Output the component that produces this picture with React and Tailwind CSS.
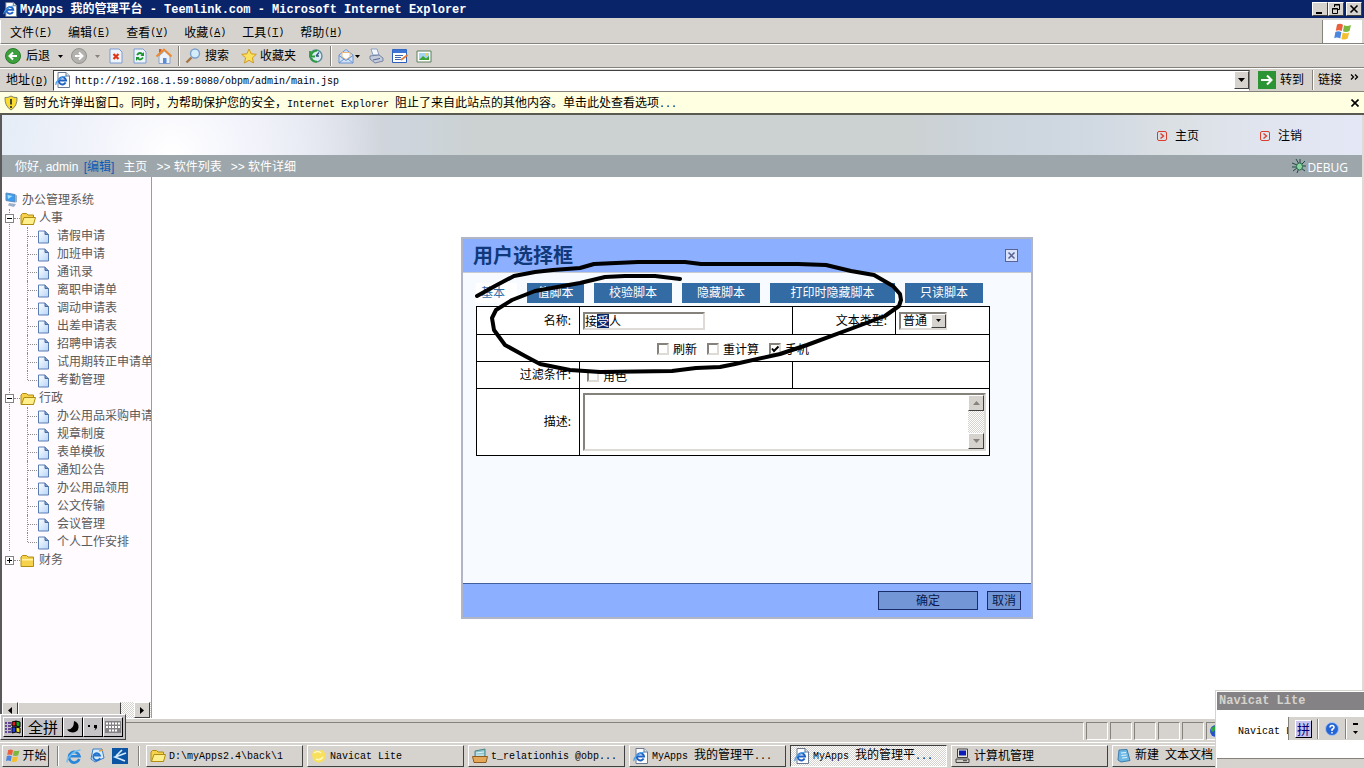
import { useEffect, useRef } from 'react';

const raised = 'border border-t-white border-l-white border-r-[#404040] border-b-[#404040] bg-[#d6d3ce]';
const hatch = 'bg-[repeating-conic-gradient(#ffffff_0_25%,#d6d3ce_0_50%)] bg-[length:2px_2px]';

/* Latin runs use the narrow monospace face, everything else the CJK one */
const Mixed = ({ text, bold = false }) => (
    <span className="whitespace-pre">
        {text.split(/([\x20-\x7e]+)/).filter(Boolean).map((part, i) => (
            <span
                key={i}
                className={
                    /^[\x20-\x7e]/.test(part)
                        ? `font-['Liberation_Mono','DejaVu_Sans_Mono',monospace] ${bold ? 'text-[12px]' : 'text-[10px]'}`
                        : 'text-[12px]'
                }
            >
                {part}
            </span>
        ))}
    </span>
);

const IePage = ({ className = 'w-4 h-4' }) => (
    <svg viewBox="0 0 16 16" className={`${className} shrink-0`}>
        <path d="M3 .5h8l3.500 3.500v11.500H3z" fill="#fff" stroke="#6b7a90" />
        <path d="M11 .5V4h3.500" fill="#dfe6f0" stroke="#6b7a90" />
        <path d="M10.600 10.600A3.600 3.600 0 1 1 11 8.400H4.200" fill="none" stroke="#1f62c4" strokeWidth="2" />
        <path d="M1 13C0 10 6 4.500 11.500 4" fill="none" stroke="#4aa0e8" strokeWidth="1.200" />
    </svg>
);

const IeLogo = () => (
    <svg viewBox="0 0 16 16" className="w-4 h-4">
        <path d="M13.300 11A5.300 5.300 0 1 1 13.500 8.300H4" fill="none" stroke="#2a86d8" strokeWidth="2.600" />
        <path d="M1.500 14.500C-.5 12 6 3 14.500 2" fill="none" stroke="#6cc0f4" strokeWidth="1.400" />
    </svg>
);

const WinFlag = ({ className = 'w-5 h-5' }) => (
    <svg viewBox="0 0 20 20" className={`${className} shrink-0`}>
        <path d="M4 2.500q3-1.500 6 .3L8.800 9q-3-1.600-6-.2z" fill="#e8603c" />
        <path d="M11 3.200q3 1.500 7-.2L16.500 9q-3.500 1.600-6.500.3z" fill="#7cb83c" />
        <path d="M2.400 10q3-1.400 6 .2L7.200 16.500q-3-1.700-6-.3z" fill="#4a86e0" />
        <path d="M9.700 10.600q3 1.500 6.500-.2L14.700 16.600q-3.500 1.700-6.300.3z" fill="#f4c030" />
    </svg>
);

const Folder = ({ open }) => (
    <svg viewBox="0 0 16 16" className="w-4 h-4 shrink-0">
        <path d="M1 13.500V4l1.500-1.500h4L8 4h5.500v9.500z" fill="#f6d24c" stroke="#b08c10" />
        {open ? (
            <path d="M1.500 13.500L4 6.500h11.500L13.500 13.500z" fill="#fdf08c" stroke="#b08c10" />
        ) : (
            <path d="M2 6h11v1.500H2z" fill="#fff3a6" />
        )}
    </svg>
);

const Leaf = () => (
    <svg viewBox="0 0 13 14" className="w-[13px] h-[14px] shrink-0">
        <defs>
            <linearGradient id="sheet" x1="0" y1="0" x2="1" y2="1">
                <stop offset="0" stopColor="#fff" />
                <stop offset="1" stopColor="#b4d4f8" />
            </linearGradient>
        </defs>
        <path d="M1.500 1H8l3.500 3.500V13h-10z" fill="url(#sheet)" stroke="#5a7cb4" />
        <path d="M8 1v3.500h3.500" fill="#7c9cd0" stroke="#4a6ca4" />
    </svg>
);

const Caret = ({ className = 'fill-black' }) => (
    <svg viewBox="0 0 5 3" className={`w-[5px] h-[3px] shrink-0 ${className}`}>
        <path d="M0 0h5L2.500 3z" />
    </svg>
);

const Separator = ({ className = '' }) => (
    <span className={`w-[2px] h-5 border-l border-l-[#84827b] border-r border-r-white ${className}`} />
);

const RoundArrow = ({ forward }) => (
    <svg viewBox="0 0 16 16" className="w-4 h-4 shrink-0">
        <circle cx="8" cy="8" r="7.500" fill={forward ? '#b4b2ae' : '#3ca03c'} stroke={forward ? '#94928e' : '#2a7c2a'} />
        <path d={forward ? 'M4 8h7M8 4.500L11.500 8 8 11.500' : 'M12 8H5M8 4.500L4.500 8 8 11.500'} fill="none" stroke="#fff" strokeWidth="2" />
    </svg>
);

const PageIcon = ({ children }) => (
    <svg viewBox="0 0 14 16" className="w-[14px] h-4 shrink-0">
        <path d="M1 1h9l3 3v11H1z" fill="#eef4fc" stroke="#7c9cd4" />
        {children}
    </svg>
);

const TitleBar = () => (
    <header className="flex h-[18px] shrink-0 items-center bg-[#0a246a] pl-[3px] pr-[2px] text-white">
        <IePage className="w-[15px] h-[15px]" />
        <h1 className="ml-[2px] flex-1 truncate text-[12px] leading-[18px] font-bold">
            <Mixed text="MyApps 我的管理平台 - Teemlink.com - Microsoft Internet Explorer" bold />
        </h1>
        <button aria-label="最小化" className={`h-[14px] w-4 ${raised}`}>
            <svg viewBox="0 0 14 12" className="block h-3 w-[14px]"><path d="M3 9h6v2H3z" /></svg>
        </button>
        <button aria-label="还原" className={`h-[14px] w-4 ${raised}`}>
            <svg viewBox="0 0 14 12" className="block h-3 w-[14px]" fill="none" stroke="#000">
                <path d="M5.500 4V1.500h5v5H9M5 2h6M3.500 5.500h5v5h-5zM3 6h6" />
            </svg>
        </button>
        <button aria-label="关闭" className={`ml-[2px] h-[14px] w-4 ${raised}`}>
            <svg viewBox="0 0 14 12" className="block h-3 w-[14px]"><path d="M3.500 2.500l7 7m0-7l-7 7" stroke="#000" strokeWidth="1.600" /></svg>
        </button>
    </header>
);

const menus = [['文件', 'F'], ['编辑', 'E'], ['查看', 'V'], ['收藏', 'A'], ['工具', 'T'], ['帮助', 'H']];

const MenuBar = () => (
    <nav className="mt-[2px] flex h-6 shrink-0 items-center border-b border-b-[#84827b] border-l border-l-white pl-[9px] pr-[2px]">
        {menus.map(([name, key]) => (
            <button key={key} className="mr-4 flex items-center pt-[2px] text-[12px] leading-4">
                {name}
                <span className="font-['Liberation_Mono',monospace] text-[10px]">(<u>{key}</u>)</span>
            </button>
        ))}
        <span className="ml-auto flex h-full w-10 items-center justify-center border-l border-l-[#84827b] bg-white">
            <WinFlag />
        </span>
    </nav>
);

const ToolBar = () => (
    <div className="flex h-6 shrink-0 items-center border-b border-b-[#84827b] border-t border-t-white pl-[5px] text-[12px]">
        <button className="flex items-center gap-[5px]"><RoundArrow />后退</button>
        <Caret className="ml-[8px] fill-black" />
        <button aria-label="前进" className="ml-[8px]"><RoundArrow forward /></button>
        <Caret className="ml-[8px] fill-[#84827b]" />
        <button aria-label="停止" className="ml-[9px]">
            <PageIcon><path d="M4.500 6l5 5m0-5l-5 5" stroke="#e03414" strokeWidth="2.200" /></PageIcon>
        </button>
        <button aria-label="刷新" className="ml-[10px]">
            <PageIcon>
                <path d="M4 7q3-4 6 0M10 9.500q-3 4-6 0" fill="none" stroke="#1c9430" strokeWidth="1.800" />
                <path d="M11 4v4H7.500zM3 13V9h3.500z" fill="#1c9430" />
            </PageIcon>
        </button>
        <button aria-label="主页" className="ml-[9px]">
            <svg viewBox="0 0 16 16" className="w-4 h-4">
                <path d="M3 8v7.500h11V8L8.500 3z" fill="#eef2fa" stroke="#8ca4cc" />
                <path d="M3 1h2.500v4H3z" fill="#c05a2c" />
                <path d="M.5 8.500L8 1.500l7.500 7" fill="none" stroke="#ec8a34" strokeWidth="2" />
                <path d="M7 10h3.500v5.500H7z" fill="#5a8cd8" />
            </svg>
        </button>
        <Separator className="ml-[6px]" />
        <button className="ml-[5px] flex items-center gap-1">
            <svg viewBox="0 0 16 16" className="w-4 h-4">
                <path d="M1.500 14.500L6.500 9.500" stroke="#a87444" strokeWidth="2.400" />
                <circle cx="10" cy="5.500" r="4.500" fill="#d4ecfc" stroke="#7ca0cc" strokeWidth="1.400" />
            </svg>
            搜索
        </button>
        <button className="ml-3 flex items-center gap-[3px]">
            <svg viewBox="0 0 16 16" className="w-4 h-4">
                <path d="M8 1l2.100 4.800 5.200.5-3.900 3.500 1.100 5.200L8 12.300 3.500 15l1.100-5.200L.7 6.300l5.200-.5z" fill="#fce060" stroke="#d09c1c" />
            </svg>
            收藏夹
        </button>
        <button aria-label="历史" className="ml-[11px]">
            <svg viewBox="0 0 16 16" className="w-4 h-4">
                <circle cx="9" cy="8" r="6" fill="#dcecf4" stroke="#5c8c9c" strokeWidth="1.400" />
                <path d="M9 8l3-3.500M9 8h3" stroke="#305880" strokeWidth="1.300" />
                <path d="M3 3v5.500h5M3.500 8.500Q5 3 10 2.500M4 10q2 4 6 3.500" fill="none" stroke="#2c9c3c" strokeWidth="1.800" />
            </svg>
        </button>
        <Separator className="ml-[7px]" />
        <button aria-label="邮件" className="ml-[6px]">
            <svg viewBox="0 0 16 16" className="w-4 h-4">
                <path d="M1 7l7-5.500L15 7v8H1z" fill="#cfe2fa" stroke="#6c94d0" />
                <path d="M4 4.500h8V9l-4 2.500L4 9z" fill="#fff" stroke="#e8b878" />
                <path d="M1 7.500l7 5 7-5M1 15l5-4M15 15l-5-4" fill="none" stroke="#6c94d0" />
            </svg>
        </button>
        <Caret className="ml-[1px] fill-black" />
        <button aria-label="打印" className="ml-[8px]">
            <svg viewBox="0 0 16 16" className="w-4 h-4">
                <path d="M3 1h6l2 6H5z" fill="#f4f8fe" stroke="#8ca0c4" />
                <path d="M2 8l9-1 4 3v3l-8 2-5-4z" fill="#c4ccdc" stroke="#7484a4" />
                <path d="M5 12l7-1.500" stroke="#54648c" />
            </svg>
        </button>
        <button aria-label="编辑" className="ml-[8px]">
            <svg viewBox="0 0 16 16" className="w-4 h-4">
                <path d="M.5 1.500h14v13H.5z" fill="#fff" stroke="#2c5cbc" />
                <path d="M.5 1.500h14V5H.5z" fill="#3c74d4" />
                <path d="M3 7.500h8M3 9.500h6M3 11.500h7" stroke="#3c64ac" />
                <path d="M9 12l6.500-5" stroke="#e07c3c" strokeWidth="1.800" />
            </svg>
        </button>
        <button aria-label="图片" className="ml-[8px]">
            <svg viewBox="0 0 16 16" className="w-4 h-4">
                <path d="M1 3h14v11H1z" fill="#fff" stroke="#5c7c5c" />
                <path d="M3 5h10v7H3z" fill="#a4d4f4" />
                <path d="M3 12l4-4 3 2.500L13 8v4z" fill="#3ca434" />
                <circle cx="10.500" cy="6.500" r="1.300" fill="#f4d43c" />
            </svg>
        </button>
    </div>
);

const AddressBar = () => (
    <div className="flex h-6 shrink-0 items-center border-b border-b-[#84827b] border-t border-t-white text-[12px]">
        <label htmlFor="address" className="w-[53px] pl-[6px]">
            地址<span className="font-['Liberation_Mono',monospace] text-[10px]">(<u>D</u>)</span>
        </label>
        <div className="flex h-[21px] flex-1 items-center border border-t-[#404040] border-l-[#404040] border-r-[#84827b] border-b-white bg-white pl-[1px]">
            <IePage />
            <input
                id="address"
                className="ml-1 h-5 min-w-0 flex-1 bg-transparent pt-[2px] font-['Liberation_Mono',monospace] text-[10px] outline-none"
                defaultValue="http://192.168.1.59:8080/obpm/admin/main.jsp"
            />
            <button aria-label="展开" className={`flex h-[18px] w-[15px] items-center justify-center ${raised}`}>
                <svg viewBox="0 0 7 4" className="w-[7px] h-1"><path d="M0 0h7L3.500 4z" /></svg>
            </button>
        </div>
        <button className="ml-2 flex items-center gap-1">
            <svg viewBox="0 0 18 18" className="w-[18px] h-[18px]">
                <path d="M0 0h18v18H0z" fill="#2c9434" />
                <path d="M3 9h10M9 4.500L13.500 9 9 13.500" fill="none" stroke="#fff" strokeWidth="2" />
            </svg>
            转到
        </button>
        <Separator className="ml-2" />
        <button className="ml-1 flex items-start gap-2 pr-[5px]">
            链接
            <svg viewBox="0 0 9 6" className="mt-[3px] h-[6px] w-[9px]" fill="none" stroke="#000" strokeWidth="1.300">
                <path d="M1 .5L3.500 3 1 5.500M5 .5L7.500 3 5 5.500" />
            </svg>
        </button>
    </div>
);

const InfoBar = () => (
    <div role="alert" className="flex h-[23px] shrink-0 items-center border-b-2 border-b-[#5a5a52] bg-[#ffffe1] pl-1 pr-[5px] text-[12px]">
        <svg viewBox="0 0 14 16" className="mr-[5px] h-4 w-[14px] shrink-0">
            <path d="M7 1q3 2 6 1.500Q13.500 11 7 15 .5 11 1 2.500 4 3 7 1z" fill="#f8dc30" stroke="#84846c" />
            <path d="M7 4v5.500M7 11v2" stroke="#333" strokeWidth="1.800" />
        </svg>
        <p className="flex-1 truncate pt-[2px] leading-5">
            <Mixed text="暂时允许弹出窗口。同时，为帮助保护您的安全，Internet Explorer 阻止了来自此站点的其他内容。单击此处查看选项..." />
        </p>
        <button aria-label="关闭提示">
            <svg viewBox="0 0 8 8" className="h-2 w-2"><path d="M.5.5l7 7m0-7l-7 7" stroke="#000" strokeWidth="1.600" /></svg>
        </button>
    </div>
);

const BannerLink = ({ children }) => (
    <a href="#" className="flex items-center gap-2 text-[12px] leading-4 text-black">
        <svg viewBox="0 0 10 10" className="h-[10px] w-[10px]" fill="none" stroke="#dc3c2c">
            <rect x=".5" y=".5" width="9" height="9" rx="1.500" />
            <path d="M3.500 2.500L6.500 5 3.500 7.500" strokeWidth="1.400" />
        </svg>
        {children}
    </a>
);

const Banner = () => (
    <div className="flex h-10 shrink-0 items-center justify-end gap-[61px] bg-[radial-gradient(circle_at_170px_40px,#ffffff_0px,#f4f5fc_70px,transparent_210px),linear-gradient(90deg,#dfeaf5_0%,#dcdfea_22%,#d0d5dc_28%,#ccd5db_31%,#ccd1d1_35%,#ccd1d1_66%,#ccd4dc_72%,#d0d8e2_80%,#dbe0e4_86%,#e0e4ee_92%,#e4e8f6_100%)] pt-[2px] pr-[60px]">
        <BannerLink>主页</BannerLink>
        <BannerLink>注销</BannerLink>
    </div>
);

const Breadcrumb = () => (
    <nav className="flex h-[22px] shrink-0 items-center bg-[#9ca6ab] pt-[2px] pl-[13px] pr-[14px] font-['Liberation_Sans','Noto_Sans_CJK_SC',sans-serif] text-[12px] leading-4 text-white">
        <span className="whitespace-pre">你好, admin </span>
        <a href="#" className="ml-[2px] text-[#0a5cb4]">[编辑]</a>
        <a href="#" className="ml-[9px]">主页</a>
        <a href="#" className="ml-[9px]">&gt;&gt; 软件列表</a>
        <a href="#" className="ml-[9px]">&gt;&gt; 软件详细</a>
        <a href="#" className="ml-auto flex items-center font-['Open_Sans',sans-serif]">
            <svg viewBox="0 0 16 16" className="mb-[3px] h-4 w-4">
                <path d="M1 5l5 2M2 13l4-3M1 9h5M5 1l3 5M9 1v5M14 3l-4 4M15 8h-5M14 13l-4-3M6 15l2-5" stroke="#1c4c44" />
                <ellipse cx="8.500" cy="8.500" rx="3" ry="3.500" fill="#8cd4a0" stroke="#2c6c4c" />
            </svg>
            <span className="pt-[2px]">DEBUG</span>
        </a>
    </nav>
);

const tree = [
    { name: '人事', open: true, items: ['请假申请', '加班申请', '通讯录', '离职申请单', '调动申请表', '出差申请表', '招聘申请表', '试用期转正申请单', '考勤管理'] },
    { name: '行政', open: true, items: ['办公用品采购申请', '规章制度', '表单模板', '通知公告', '办公用品领用', '公文传输', '会议管理', '个人工作安排'] },
    { name: '财务', open: false, items: [] },
];

const TreeFolder = ({ name, open, items, last }) => (
    <li className={`border-l border-dotted ${last ? 'border-transparent' : 'border-[#8c8c8c]'}`}>
        <div className="flex h-[18px] items-center">
            <button
                aria-label={name}
                className="-ml-[5px] flex h-[9px] w-[9px] shrink-0 items-center justify-center border border-[#848484] bg-white"
            >
                <svg viewBox="0 0 5 5" className="h-[5px] w-[5px]">
                    <path d={open ? 'M0 2h5v1H0z' : 'M0 2h2V0h1v2h2v1H3v2H2V3H0z'} />
                </svg>
            </button>
            <span className="w-[6px] border-t border-dotted border-[#8c8c8c]" />
            <span className="pt-[2px]"><Folder open={open} /></span>
            <a href="#" className="ml-[3px]">{name}</a>
        </div>
        <ul className="pl-[17px]">
            {items.map((item, i) => (
                <li key={item} className="flex h-[18px] items-center">
                    <span className={`w-0 shrink-0 border-l border-dotted border-[#8c8c8c] ${i === items.length - 1 ? 'h-[9px] self-start' : 'h-[18px]'}`} />
                    <span className="w-[9px] shrink-0 border-t border-dotted border-[#8c8c8c]" />
                    <span className="shrink-0 pt-[2px]"><Leaf /></span>
                    <a href="#" className="ml-[7px] whitespace-nowrap">{item}</a>
                </li>
            ))}
        </ul>
    </li>
);

const Sidebar = () => (
    <aside className="flex w-[150px] shrink-0 flex-col border-r border-r-[#9c9c9c] bg-[#fffbff]">
        <div className="flex-1 overflow-hidden pt-[14px] text-[12px] leading-4 text-[#5a5a5a]">
            <div className="flex h-[18px] items-center gap-1 pl-[2px]">
                <svg viewBox="0 0 14 16" className="h-4 w-[14px] shrink-0">
                    <path d="M2 1l9 1.500V10L2 8.500z" fill="#3c9cf0" stroke="#5c8cbc" />
                    <path d="M3.500 3l5 1L4 7z" fill="#a4e0ff" />
                    <path d="M11 2.500l2 1V10l-2 .5zM5 11l7 1-2 3-6-1.500z" fill="#9cb0c8" />
                </svg>
                <a href="#">办公管理系统</a>
            </div>
            <ul className="pl-[7px]">
                {tree.map((folder, i) => (
                    <TreeFolder key={folder.name} {...folder} last={i === tree.length - 1} />
                ))}
            </ul>
        </div>
        <div className={`flex h-4 shrink-0 ${hatch}`}>
            <button aria-label="向左" className={`flex h-4 w-4 items-center justify-center ${raised}`}>
                <svg viewBox="0 0 4 7" className="h-[7px] w-1"><path d="M4 0v7L0 3.500z" /></svg>
            </button>
            <span className={`h-4 w-[103px] ${raised}`} />
            <button aria-label="向右" className={`mr-[1px] ml-auto flex h-4 w-4 items-center justify-center ${raised}`}>
                <svg viewBox="0 0 4 7" className="h-[7px] w-1"><path d="M0 0v7l4-3.500z" /></svg>
            </button>
        </div>
    </aside>
);

const sunken = 'border-2 border-t-[#84827b] border-l-[#84827b] border-r-[#dedbd6] border-b-[#dedbd6] bg-white';

const Check = ({ id, label, checked = false }) => (
    <span className="inline-flex items-center gap-1">
        <span className="relative inline-flex">
            <input
                id={id}
                type="checkbox"
                defaultChecked={checked}
                className={`peer h-3 w-3 appearance-none ${sunken}`}
            />
            <svg viewBox="0 0 12 12" className="pointer-events-none absolute inset-0 hidden h-3 w-3 peer-checked:block">
                <path d="M3 5.500L5 8l4.500-4.500" fill="none" stroke="#000" strokeWidth="2" />
            </svg>
        </span>
        <label htmlFor={id} className="pt-[1px]">{label}</label>
    </span>
);

const tabs = [
    ['值脚本', 'w-[57px]'],
    ['校验脚本', 'w-[78px]'],
    ['隐藏脚本', 'w-[78px]'],
    ['打印时隐藏脚本', 'w-[125px]'],
    ['只读脚本', 'w-[78px]'],
];

const FieldTable = () => {
    const nameRef = useRef(null);

    useEffect(() => {
        nameRef.current.focus();
        nameRef.current.setSelectionRange(1, 2);
    }, []);

    return (
        <table className="mt-[3px] w-[514px] table-fixed border-collapse border border-black bg-white text-[12px] leading-4 [&_td]:border [&_td]:border-black [&_td]:p-0 [&_th]:border [&_th]:border-black [&_th]:p-0 [&_th]:pr-2 [&_th]:text-right [&_th]:font-normal">
            <colgroup>
                <col className="w-[103px]" />
                <col className="w-[213px]" />
                <col className="w-[103px]" />
                <col />
            </colgroup>
            <tbody>
                <tr className="h-7">
                    <th><label htmlFor="field-name">名称:</label></th>
                    <td>
                        <input
                            id="field-name"
                            ref={nameRef}
                            defaultValue="接受人"
                            className={`ml-[3px] block h-[18px] w-[122px] text-[12px] outline-none selection:bg-[#0a246a] selection:text-white ${sunken}`}
                        />
                    </td>
                    <th><label htmlFor="field-type">文本类型:</label></th>
                    <td>
                        <span className="relative ml-[3px] flex w-12">
                            <select id="field-type" className={`h-[18px] w-12 appearance-none pl-[2px] text-[12px] leading-[14px] outline-none ${sunken}`}>
                                <option>普通</option>
                            </select>
                            <span className={`pointer-events-none absolute top-[2px] right-[1px] flex h-[14px] w-[15px] items-center justify-center ${raised}`}>
                                <Caret />
                            </span>
                        </span>
                    </td>
                </tr>
                <tr className="h-[27px]">
                    <td colSpan={4}>
                        <div className="flex justify-center gap-[10px] pt-[2px]">
                            <Check id="refresh" label="刷新" />
                            <Check id="recalc" label="重计算" />
                            <Check id="mobile" label="手机" checked />
                        </div>
                    </td>
                </tr>
                <tr className="h-[27px]">
                    <th scope="row">过滤条件:</th>
                    <td><div className="flex pt-[2px] pl-[7px]"><Check id="role" label="角色" /></div></td>
                    <td colSpan={2} />
                </tr>
                <tr className="h-[67px]">
                    <th><label htmlFor="description">描述:</label></th>
                    <td colSpan={3}>
                        <div className={`mx-[3px] flex h-[58px] ${sunken}`}>
                            <textarea id="description" className="min-w-0 flex-1 resize-none overflow-hidden outline-none" />
                            <div className={`flex w-4 flex-col justify-between ${hatch}`}>
                                <button aria-label="向上" className={`flex h-4 w-4 items-center justify-center ${raised}`}>
                                    <svg viewBox="0 0 7 4" className="h-1 w-[7px] fill-[#84827b]"><path d="M0 4h7L3.500 0z" /></svg>
                                </button>
                                <button aria-label="向下" className={`flex h-4 w-4 items-center justify-center ${raised}`}>
                                    <svg viewBox="0 0 7 4" className="h-1 w-[7px] fill-[#84827b]"><path d="M0 0h7L3.500 4z" /></svg>
                                </button>
                            </div>
                        </div>
                    </td>
                </tr>
            </tbody>
        </table>
    );
};

const scribble =
    'M16 59L34 49 53 39 74 35 92 33 119 31 133 27 177 25H224L240 27H337L365 28 390 34 413 38 432 49 439 57 440 63 438 69 424 79 392 91 346 108 319 117 274 127 259 130 235 131 211 134 139 135 109 133 79 127 64 119 44 108 33 93 31 81 35 73 51 63 74 54 119 46 144 40 164 39H194L219 42';

const Dialog = () => (
    <section role="dialog" aria-labelledby="dialog-title" className="relative w-[572px] shrink-0">
        <div className="border-2 border-[#b1b5c8] bg-[#f7faff]">
            <div className="flex h-[34px] items-center justify-between border-b border-b-[#c8ccd0] bg-[#8cb0ff] pr-[13px] pl-[10px]">
                <h2 id="dialog-title" className="text-[20px] leading-6 font-bold text-[#10397b]">用户选择框</h2>
                <button aria-label="关闭">
                    <svg viewBox="0 0 13 13" className="block h-[13px] w-[13px]" stroke="#5a6294">
                        <rect x=".5" y=".5" width="12" height="12" fill="#d8e2fa" />
                        <path d="M3.500 3.500l6 6m0-6l-6 6" strokeWidth="1.500" />
                    </svg>
                </button>
            </div>
            <div className="h-[310px] px-[13px] pt-[10px]">
                <div role="tablist" className="flex gap-[10px] text-[12px] leading-5">
                    <button role="tab" aria-selected="true" className="h-5 w-[41px] bg-white pl-[5px] text-left text-[#336ba5]">基本</button>
                    {tabs.map(([name, width]) => (
                        <button key={name} role="tab" aria-selected="false" className={`h-5 bg-[#336ba5] text-white ${width}`}>{name}</button>
                    ))}
                </div>
                <FieldTable />
            </div>
            <div className="flex h-[34px] items-center justify-end gap-[9px] border-t border-t-[#42619c] bg-[#8cb0ff] pr-[10px] text-[12px] leading-4 text-[#0a1a4a]">
                <button className="h-[19px] w-[100px] border border-[#182c6b] bg-[#7396d6]">确定</button>
                <button className="h-[19px] w-[34px] border border-[#182c6b] bg-[#7396d6]">取消</button>
            </div>
        </div>
        <svg viewBox="0 0 572 382" className="pointer-events-none absolute inset-0 h-full w-full">
            <path d={scribble} fill="none" stroke="#000" strokeWidth="4" strokeLinecap="round" strokeLinejoin="round" />
        </svg>
    </section>
);

const StatusBar = () => (
    <footer className="flex h-6 shrink-0 gap-[2px] border-t border-t-white bg-[#d6d3ce] pt-[3px] pb-[2px] pr-[136px]">
        <span className="flex-1 border-t border-t-[#84827b] border-r border-r-white" />
        {[1, 2, 3, 4, 5].map((n) => (
            <span key={n} className="w-[22px] border border-t-[#84827b] border-l-[#84827b] border-r-white border-b-white" />
        ))}
        <span className="flex w-[22px] items-center border border-t-[#84827b] border-l-[#84827b] border-r-white border-b-white pl-[2px]">
            <svg viewBox="0 0 14 14" className="h-[14px] w-[14px]">
                <circle cx="7" cy="7" r="6" fill="#2850c8" />
                <path d="M2 4l4-2 1 3-3 3-2-1zM5 9l4 1-1 3z" fill="#2ca83c" />
            </svg>
        </span>
    </footer>
);

const ServerIcon = () => (
    <svg viewBox="0 0 16 16" className="h-4 w-4 shrink-0">
        <path d="M3 3l10-2v8H3z" fill="#8cc4cc" stroke="#4c848c" />
        <path d="M4 5l8-1M4 7h8" stroke="#e4f4f4" />
        <path d="M.5 8.500h15l-1.500 6H2z" fill="#e4a858" stroke="#8c5c24" />
    </svg>
);

const ComputerIcon = () => (
    <svg viewBox="0 0 16 16" className="h-4 w-4 shrink-0">
        <path d="M2.500 1h10v8.500h-10z" fill="#e8e8e0" stroke="#404040" />
        <path d="M4 2.500h7v5H4z" fill="#0c1cb4" />
        <path d="M1 11h13v3.500H1z" fill="#d4d0c8" stroke="#404040" />
        <path d="M8 12.700h4" stroke="#404040" />
    </svg>
);

const NoteIcon = () => (
    <svg viewBox="0 0 16 16" className="h-4 w-4 shrink-0">
        <path d="M3 2l8-.5 3 11L5 14 2 12z" fill="#6cb8e4" stroke="#3c7cac" />
        <path d="M5 5l5-.5M5.500 7.500l5-.5M6 10l5-.5" stroke="#e0f4ff" />
    </svg>
);

const NavicatIcon = () => (
    <svg viewBox="0 0 16 16" className="h-4 w-4 shrink-0">
        <path d="M3 2l4 1 5-1 3 5-2 6-6 2-5-3-1-6z" fill="#f8e05c" />
        <path d="M3 5q4-3 7 0M5 11q4 2 7-2" fill="none" stroke="#fff8c0" strokeWidth="1.500" />
    </svg>
);

const tasks = [
    { icon: <Folder open />, text: 'D:\\myApps2.4\\back\\1' },
    { icon: <NavicatIcon />, text: 'Navicat Lite' },
    { icon: <ServerIcon />, text: 't_relationhis @obp...' },
    { icon: <IePage />, text: 'MyApps 我的管理平...' },
    { icon: <IePage />, text: 'MyApps 我的管理平...', active: true },
    { icon: <ComputerIcon />, text: '计算机管理' },
    { icon: <NoteIcon />, text: '新建 文本文档' },
];

const TaskBar = () => (
    <nav className="flex h-[26px] shrink-0 items-center overflow-hidden border-t border-t-white bg-[#d6d3ce] pl-[2px] text-[12px] leading-4">
        <button className={`flex h-[22px] w-[47px] shrink-0 items-center justify-center ${raised}`}>
            <WinFlag className="h-4 w-[18px]" />开始
        </button>
        <Separator className="ml-2 h-5" />
        <button aria-label="Internet Explorer" className="ml-[7px]"><IeLogo /></button>
        <button aria-label="Outlook" className="ml-[7px]">
            <svg viewBox="0 0 16 16" className="h-4 w-4">
                <path d="M4 1h9l2 9-9 4-4-3z" fill="#d8ecfc" stroke="#3c7cc4" />
                <path d="M11 10A3.500 3.500 0 1 1 11 7.500H5.500" fill="none" stroke="#2474cc" strokeWidth="1.800" />
                <path d="M10 3l4-1" stroke="#e0a040" strokeWidth="1.500" />
            </svg>
        </button>
        <button aria-label="桌面" className="ml-[7px]">
            <svg viewBox="0 0 16 16" className="h-4 w-4">
                <rect width="16" height="16" fill="#0c54a4" />
                <path d="M14 5L3 9l10 4M10 2L4 8" fill="none" stroke="#d4ecff" strokeWidth="1.600" />
            </svg>
        </button>
        <Separator className="ml-[10px] h-5 shrink-0" />
        <div className="ml-[6px] flex gap-1">
            {tasks.map(({ icon, text, active }, i) => (
                <button
                    key={i}
                    className={`flex h-[22px] w-[157px] shrink-0 items-center gap-[3px] pl-[3px] ${
                        active ? `border border-t-[#404040] border-l-[#404040] border-r-white border-b-white ${hatch}` : raised
                    }`}
                >
                    {icon}
                    <Mixed text={text} />
                </button>
            ))}
        </div>
    </nav>
);

const imeButton = 'flex h-5 items-center justify-center border border-t-white border-l-white border-r-black border-b-black bg-[#c6c3c6]';

const ImeBar = () => (
    <div className="absolute bottom-7 left-0 flex border border-t-white border-l-white border-r-[#404040] border-b-[#404040] bg-[#c6c3c6] p-[2px]">
        <button aria-label="输入法" className={`w-5 ${imeButton}`}>
            <svg viewBox="0 0 16 14" className="h-[14px] w-4">
                <path d="M7 2l4-1v5H7z" fill="#e02020" stroke="#000" />
                <path d="M11 1l4 1v5l-4-1z" fill="#20a020" stroke="#000" />
                <path d="M7 7h4v5l-4 1z" fill="#2040e0" stroke="#000" />
                <path d="M11 7l4 1v5l-4-1z" fill="#e8d820" stroke="#000" />
                <path d="M0 3h2m1 0h3M0 6h2m1 0h3M0 9h2m1 0h3M0 12h2m1 0h3" stroke="#402080" strokeWidth="1.500" />
            </svg>
        </button>
        <button className={`w-10 text-[15px] leading-5 ${imeButton}`}>全拼</button>
        <button aria-label="半角" className={`w-5 ${imeButton}`}>
            <svg viewBox="0 0 12 12" className="h-3 w-3"><path d="M7 0q5 1.500 4.500 6.500Q11 11 6 11.500 2 11.500 0 8.500 7 9 7 0z" /></svg>
        </button>
        <button aria-label="标点" className={`w-5 ${imeButton}`}>
            <svg viewBox="0 0 12 12" className="h-3 w-3"><path d="M1 4h2v2H1zM7 4h3v3L7.500 9.500 8.500 7H7z" /></svg>
        </button>
        <button aria-label="软键盘" className={`w-5 ${imeButton}`}>
            <svg viewBox="0 0 16 12" className="h-3 w-4">
                <path d="M0 0h16v12H0z" fill="#848284" />
                <path d="M1 2.500h14M1 6h14M4 9.500h8" stroke="#fff" strokeWidth="2" strokeDasharray="2 1" />
            </svg>
        </button>
    </div>
);

const NavicatTray = () => (
    <div className="absolute right-0 bottom-0 flex h-[78px] w-[149px] flex-col border-t border-l border-[#d6d3ce] bg-[#d6d3ce] pt-[1px] pl-[1px] shadow-[inset_1px_1px_0_#ffffff]">
        <div className="h-[18px] bg-[#848284] pl-[2px] font-['Liberation_Mono',monospace] text-[12px] leading-[18px] font-bold text-[#d6d3ce]">Navicat Lite</div>
        <div className="flex h-[49px] items-start border-b border-b-[#84827b] bg-white pt-[7px]">
            <span className="mt-[7px] w-[71px] overflow-hidden pl-[21px] font-['Liberation_Mono',monospace] text-[10px] leading-4 whitespace-nowrap">Navicat L</span>
            <div className="flex h-[23px] flex-1 items-center border-l border-l-[#84827b] bg-[#d6d3ce] pl-[6px]">
                <button className="flex h-[18px] w-[17px] items-center justify-center border border-t-white border-l-white border-r-black border-b-black bg-[#c6c3ef] text-[13px] leading-4 text-[#00007b]">拼</button>
                <Separator className="ml-[5px]" />
                <button aria-label="帮助" className="ml-[6px]">
                    <svg viewBox="0 0 14 14" className="block h-[14px] w-[14px]">
                        <circle cx="7" cy="7" r="6.500" fill="#2464d4" stroke="#a4c4f4" />
                        <path d="M5 5.500Q5 3.500 7 3.500t2 2Q9 6.500 7 7.500V9M7 10v1.500" fill="none" stroke="#fff" strokeWidth="1.500" />
                    </svg>
                </button>
                <Separator className="ml-[6px]" />
                <button aria-label="选项" className="ml-[6px] flex flex-col gap-[6px]">
                    <span className="h-[2px] w-[5px] bg-black" />
                    <Caret />
                </button>
            </div>
        </div>
    </div>
);

export default function App() {
    return (
        <div className="relative flex h-screen flex-col overflow-hidden bg-[#d6d3ce] font-['Noto_Sans','Noto_Sans_CJK_SC',sans-serif] text-[12px] text-black">
            <TitleBar />
            <MenuBar />
            <ToolBar />
            <AddressBar />
            <InfoBar />
            <div className="flex min-h-0 flex-1 flex-col border-r-2 border-r-[#dedbd6] border-l-2 border-l-[#5a5a5a]">
                <Banner />
                <Breadcrumb />
                <div className="flex min-h-0 flex-1">
                    <Sidebar />
                    <main className="flex flex-1 items-start justify-center bg-white pt-[60px] pr-5">
                        <Dialog />
                    </main>
                </div>
            </div>
            <StatusBar />
            <TaskBar />
            <ImeBar />
            <NavicatTray />
        </div>
    );
}
